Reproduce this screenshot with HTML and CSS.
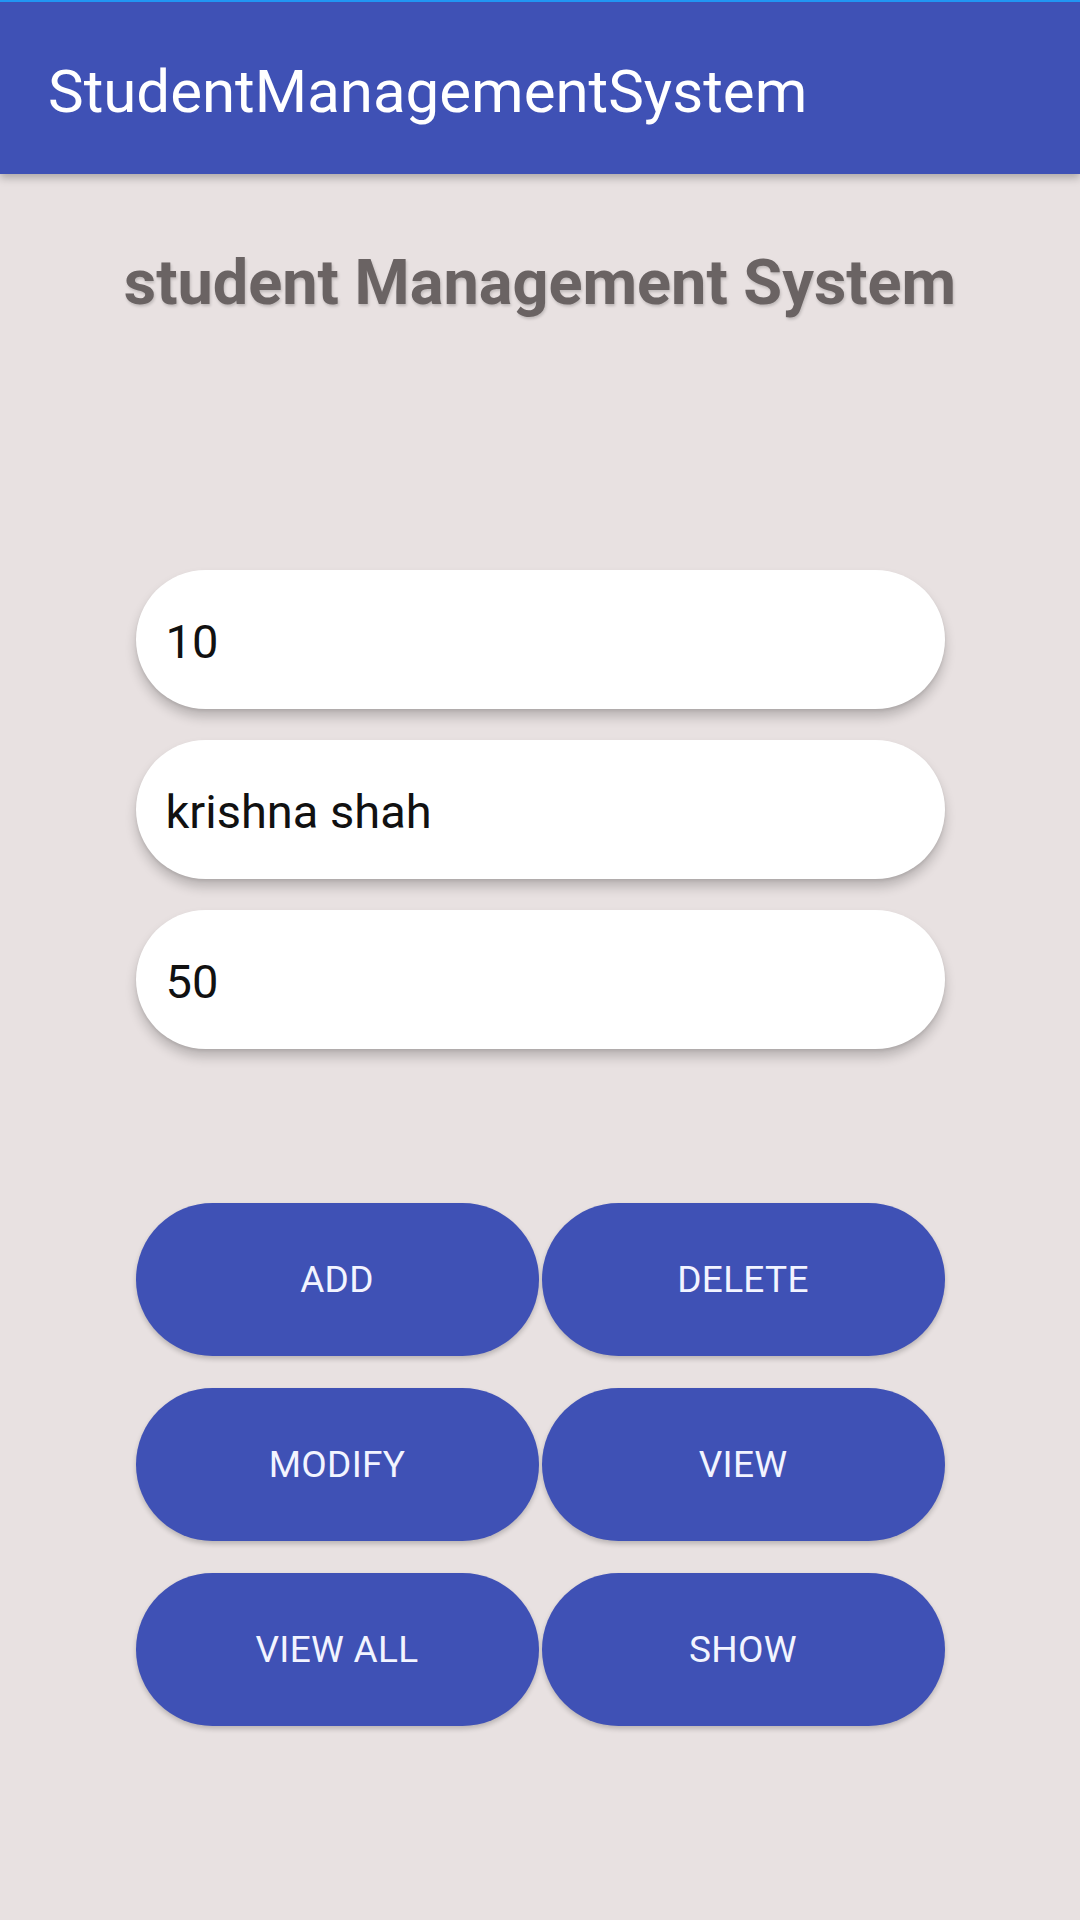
FILE: index.html
```html
<!DOCTYPE html>
<html>
<head>
<meta charset="utf-8">
<link rel="stylesheet" href="styles.css">
</head>
<body>
<header class="appbar"><span class="appbar-title">StudentManagementSystem</span></header>
<main class="content">
  <h1 class="heading">student Management System</h1>
  <div class="fields">
    <div class="field">10</div>
    <div class="field">krishna shah</div>
    <div class="field">50</div>
  </div>
  <div class="buttons">
    <button class="btn">ADD</button>
    <button class="btn">DELETE</button>
    <button class="btn">MODIFY</button>
    <button class="btn">VIEW</button>
    <button class="btn">VIEW ALL</button>
    <button class="btn">SHOW</button>
  </div>
</main>
</body>
</html>
```
FILE: styles.css
```css
html, body {
  margin: 0;
  padding: 0;
}
body {
  width: 1080px;
  height: 1920px;
  background: #e8e1e1;
  font-family: Roboto, "Liberation Sans", sans-serif;
  overflow: hidden;
}
.appbar {
  box-sizing: border-box;
  height: 174px;
  background: #3f51b5;
  border-top: 2px solid #2196f3;
  padding: 55px 0 0 48px;
  box-shadow: 0 4px 8px rgba(0, 0, 0, 0.25);
  position: relative;
  z-index: 1;
}
.appbar-title {
  display: block;
  color: #ffffff;
  font-size: 60px;
  line-height: 70px;
  font-weight: 400;
}
.content {
  display: flex;
  flex-direction: column;
  align-items: center;
}
.heading {
  margin: 72px 0 0 0;
  font-size: 63px;
  line-height: 74px;
  font-weight: 700;
  color: #6a6363;
  text-shadow: 1px 2px 3px rgba(0, 0, 0, 0.18);
}
.fields {
  margin-top: 250px;
  width: 809px;
  display: flex;
  flex-direction: column;
  gap: 31px;
}
.field {
  box-sizing: border-box;
  height: 139px;
  border-radius: 70px;
  background: #ffffff;
  display: flex;
  align-items: center;
  padding-left: 30px;
  padding-top: 4px;
  font-size: 47px;
  color: #111111;
  box-shadow: 0 8px 12px rgba(0, 0, 0, 0.2), 0 2px 3px rgba(0, 0, 0, 0.08);
}
.buttons {
  margin-top: 154px;
  width: 809px;
  display: grid;
  grid-template-columns: 1fr 1fr;
  column-gap: 3px;
  row-gap: 32px;
}
.btn {
  height: 153px;
  border: none;
  border-radius: 77px;
  background: #3f51b5;
  color: #f2f4ff;
  font-family: Roboto, "Liberation Sans", sans-serif;
  font-size: 37px;
  letter-spacing: 0.3px;
  padding: 0;
  box-shadow: 0 3px 5px rgba(0, 0, 0, 0.2);
}
```
